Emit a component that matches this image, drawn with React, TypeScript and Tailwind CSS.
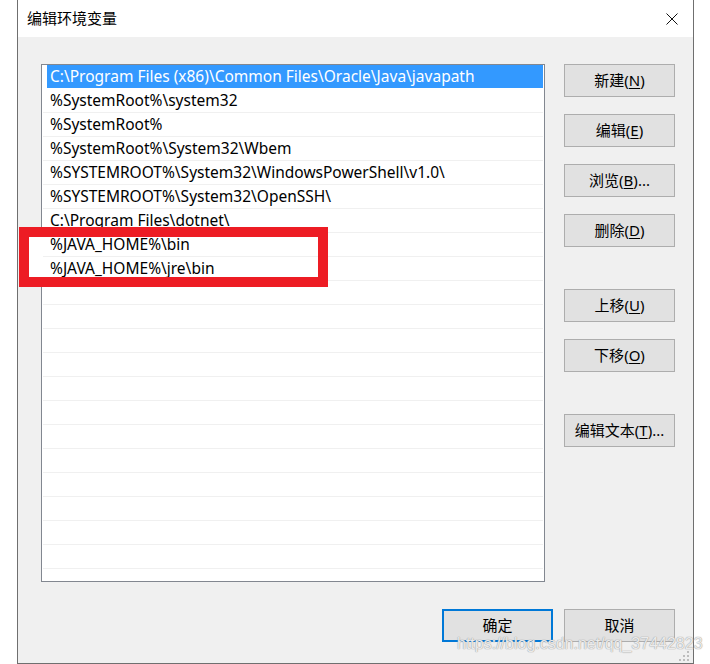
import React from "react";

const paths = [
  "C:\\Program Files (x86)\\Common Files\\Oracle\\Java\\javapath",
  "%SystemRoot%\\system32",
  "%SystemRoot%",
  "%SystemRoot%\\System32\\Wbem",
  "%SYSTEMROOT%\\System32\\WindowsPowerShell\\v1.0\\",
  "%SYSTEMROOT%\\System32\\OpenSSH\\",
  "C:\\Program Files\\dotnet\\",
  "%JAVA_HOME%\\bin",
  "%JAVA_HOME%\\jre\\bin",
];

const Btn = ({
  label,
  k,
  tail = "",
  primary = false,
  className = "",
}: {
  label: string;
  k?: string;
  tail?: string;
  primary?: boolean;
  className?: string;
}) => (
  <div
    className={`w-[111px] h-[33px] flex items-center justify-center bg-[#e1e1e1] text-black text-[15px] ${
      primary ? "border-2 border-[#0078d7]" : "border border-[#adadad]"
    } ${className}`}
  >
    {label}
    {k && (
      <>
        (<span className="underline underline-offset-2">{k}</span>)
      </>
    )}
    {tail}
  </div>
);

const App = () => {
  const rows = Array.from({ length: 22 }, (_, i) => paths[i] ?? "");

  return (
    <div
      className="relative w-[710px] h-[664px] bg-white overflow-hidden"
      style={{ fontFamily: '"Segoe UI", "Noto Sans", "Noto Sans CJK SC", sans-serif' }}
    >
      {/* dialog */}
      <div className="ml-[17px] w-[677px] h-[664px] flex flex-col border-l border-r border-b border-[#6f6f6f]">
        {/* title bar */}
        <div className="h-[37px] bg-white flex items-center justify-between pl-[9px] pr-[15px] shrink-0">
          <span className="text-[15px] text-black leading-none">编辑环境变量</span>
          <svg width="12" height="12" viewBox="0 0 12 12" className="mt-[1px]">
            <path d="M0.5 0.5 L11.5 11.5 M11.5 0.5 L0.5 11.5" stroke="#111" strokeWidth="1" />
          </svg>
        </div>

        {/* body */}
        <div className="flex-1 bg-[#f0f0f0] pl-[23px] pt-[27px] pr-[18px] flex flex-col">
          <div className="flex gap-[19px]">
            {/* list */}
            <div className="w-[504px] h-[518px] bg-white border border-[#828790] overflow-hidden">
              {rows.map((p, i) => (
                <div
                  key={i}
                  className={`h-[24px] border-b ml-[1px] mr-[1px] ${
                    i === 0 ? "border-transparent pl-[4px]" : "border-[#f0f0f0]"
                  }`}
                >
                  <div
                    className={`h-[23px] flex items-center pt-[1px] text-[15.5px] whitespace-nowrap ${
                      i === 0 ? "bg-[#3399ff] text-white pl-[3px]" : "text-black pl-[7px]"
                    }`}
                  >
                    {p}
                  </div>
                </div>
              ))}
            </div>

            {/* side buttons */}
            <div className="flex flex-col">
              <Btn label="新建" k="N" />
              <Btn label="编辑" k="E" className="mt-[17px]" />
              <Btn label="浏览" k="B" tail="..." className="mt-[17px]" />
              <Btn label="删除" k="D" className="mt-[17px]" />
              <Btn label="上移" k="U" className="mt-[42px]" />
              <Btn label="下移" k="O" className="mt-[17px]" />
              <Btn label="编辑文本" k="T" tail="..." className="mt-[42px]" />
            </div>
          </div>

          {/* bottom buttons */}
          <div className="flex justify-end gap-[11px] mt-[27px]">
            <Btn label="确定" primary />
            <Btn label="取消" />
          </div>
        </div>
      </div>

      {/* red annotation box */}
      <div className="absolute left-[19px] top-[227px] w-[309px] h-[60px] border-[10px] border-[#ed1c24]">
        <div className="w-[13px] h-full bg-white" />
      </div>

      {/* resize grip */}
      <svg className="absolute left-[678px] top-[651px]" width="12" height="10" viewBox="0 0 12 10">
        <rect x="9" y="0" width="2" height="2" fill="#bdbdbd" />
        <rect x="5" y="4" width="2" height="2" fill="#bdbdbd" />
        <rect x="9" y="4" width="2" height="2" fill="#bdbdbd" />
        <rect x="1" y="8" width="2" height="2" fill="#bdbdbd" />
        <rect x="5" y="8" width="2" height="2" fill="#bdbdbd" />
        <rect x="9" y="8" width="2" height="2" fill="#bdbdbd" />
      </svg>

      {/* watermark */}
      <div
        className="absolute left-[457px] top-[636px] text-[16px] leading-none text-white/80 whitespace-nowrap [text-shadow:0_0_1px_#9a9a9a,0_0_1px_#9a9a9a]"
        style={{ fontFamily: '"Liberation Sans", Arial, sans-serif' }}
      >
        https://blog.csdn.net/qq_37442823
      </div>
    </div>
  );
};

export default App;
